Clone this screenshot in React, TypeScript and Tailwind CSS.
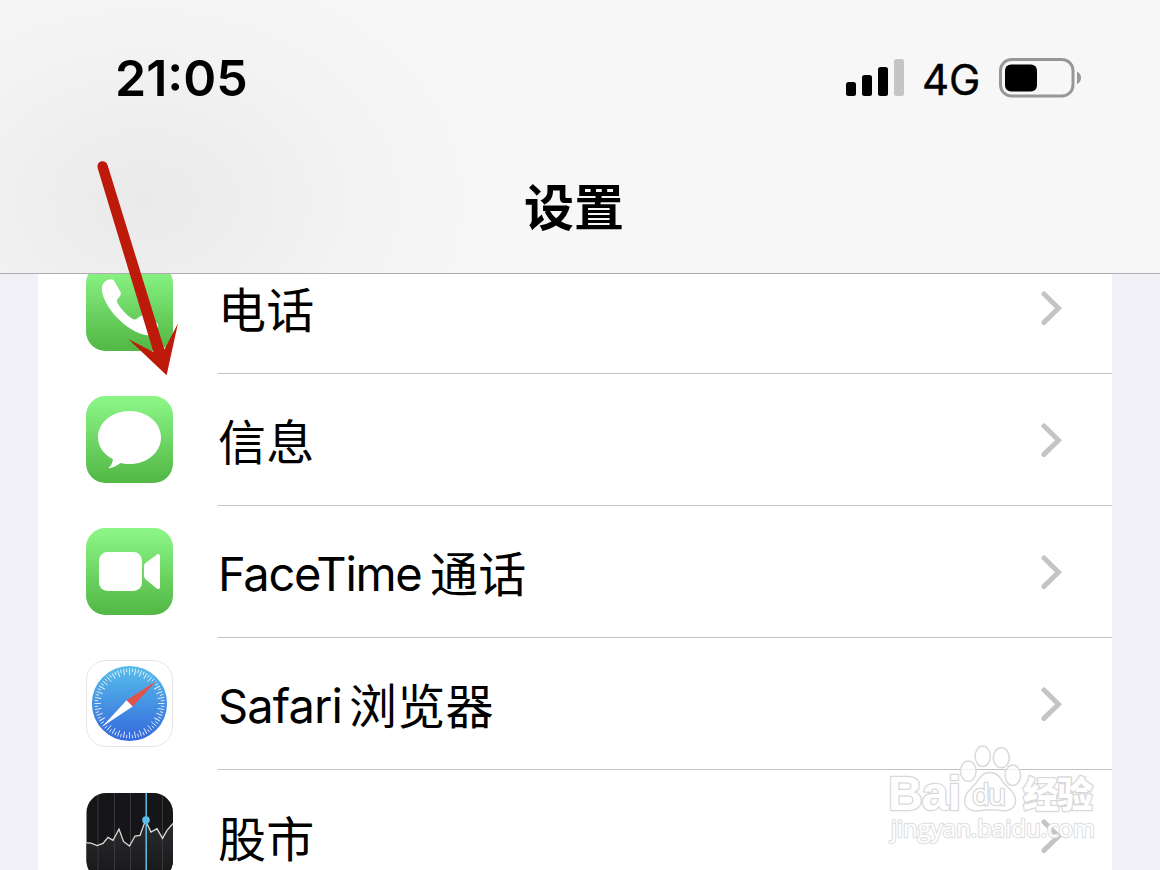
import type { ReactNode } from 'react'

interface SettingsRow {
  id: string
  latin?: string
  latinClass?: string
  label: string
  icon: ReactNode
}

function PhoneIcon() {
  return (
    <svg viewBox="0 0 87 87" className="size-[87px]">
      <rect width="87" height="87" rx="19.5" fill="url(#green)" />
      <path
        d="M22.5 15.8C25.5 14.8 27.6 15.6 28.6 17.4L34.3 27.6C35.3 29.6 35 31 33.6 32.6L31.6 35C30.6 36.4 30.8 37.8 31.8 39.4C35 45 40 50.4 45.5 54.2C47.4 55.6 49 55.8 50.6 54.8L55 51.8C57 50.6 58.6 50.8 60.4 52L70 58.2C72.6 60 72.8 62.2 71.6 64.6C69.6 68.8 66 71.6 61 71.2C51 70.2 39.4 62.6 31 53.6C22.6 44.6 16 33.4 15.8 25C15.8 20.4 18.2 17.2 22.5 15.8Z"
        fill="#fff"
      />
    </svg>
  )
}

function MessagesIcon() {
  return (
    <svg viewBox="0 0 87 87" className="size-[87px]">
      <rect width="87" height="87" rx="19.5" fill="url(#green)" />
      <path
        d="M43.5 15C26 15 12 26.6 12 41.4C12 50.4 17.6 58.2 26.8 63C26.8 66.4 25.2 69.6 22.8 71.6C22.4 72 22.8 72.4 23.4 72.3C27.6 71.6 31.4 69.6 34.4 67C37.2 67.7 40.4 68 43.5 68C61 68 75 56.2 75 41.4C75 26.6 61 15 43.5 15Z"
        fill="#fff"
      />
    </svg>
  )
}

function FaceTimeIcon() {
  return (
    <svg viewBox="0 0 87 87" className="size-[87px]">
      <rect width="87" height="87" rx="19.5" fill="url(#green)" />
      <rect x="13" y="24" width="43" height="39" rx="8.5" fill="#fff" />
      <path
        d="M58 38.4C58 36.8 58.6 35.8 59.8 34.8L70.4 27C72.4 25.4 74 26 74 28.6V58.4C74 61 72.4 61.8 70.4 60.2L59.8 51.4C58.6 50.4 58 49.4 58 47.8Z"
        fill="#fff"
      />
    </svg>
  )
}

function SafariIcon() {
  return (
    <svg viewBox="0 0 87 87" className="size-[87px]">
      <rect x="0.5" y="0.5" width="86" height="86" rx="19.5" fill="#fff" stroke="#e6e6e8" />
      <circle cx="43.5" cy="43.5" r="37.6" fill="url(#sky)" />
      {Array.from({ length: 72 }, (_, i) => (
        <line
          key={i}
          x1="43.5"
          x2="43.5"
          y1="8.5"
          y2={i % 2 === 0 ? 15 : 12}
          stroke="#fff"
          strokeWidth="0.9"
          opacity="0.85"
          transform={`rotate(${i * 5} 43.5 43.5)`}
        />
      ))}
      <path d="M70.5 20.8L40.6 40.2L46.6 46.6Z" fill="#e0524a" />
      <path d="M16.4 66.4L40.6 40.2L46.6 46.6Z" fill="#fff" />
    </svg>
  )
}

function StocksIcon() {
  return (
    <svg viewBox="0 0 87 87" className="mt-px size-[87px]">
      <clipPath id="stocks">
        <rect x="0.5" width="86.5" height="87" rx="19.5" />
      </clipPath>
      <g clipPath="url(#stocks)">
        <rect width="87" height="87" fill="#161618" />
        <path
          d="M0 50L11 53L18 50L23 44L27 47L33 36L37 48L43 53L50 43H54L59 30L65 39L71 36L76 46L87 31V87H0Z"
          fill="url(#graph)"
        />
        <path d="M12 0V87M28.5 0V87M44.5 0V87M76.5 0V87" stroke="#38383a" strokeWidth="1" />
        <path
          d="M0 49.8L5 50.2L11 52.6L17 50.4L22 44.4L27 47.4L33 36L37.5 48.4L43.5 53L49 43L54 42.4L59.5 27.4L65 39L71 35.6L76.5 45.4L81 37.4L87 30.4"
          fill="none"
          stroke="#dcdcdc"
          strokeWidth="1.3"
        />
        <path d="M60.2 0V87" stroke="#59b5dd" strokeWidth="1.6" />
        <circle cx="60" cy="27" r="3.8" fill="#5bbcea" />
      </g>
    </svg>
  )
}

const ROWS: SettingsRow[] = [
  { id: 'phone', label: '电话', icon: <PhoneIcon /> },
  { id: 'messages', label: '信息', icon: <MessagesIcon /> },
  {
    id: 'facetime',
    latin: 'FaceTime',
    latinClass: 'w-[212px] tracking-[-1.3px]',
    label: '通话',
    icon: <FaceTimeIcon />,
  },
  {
    id: 'safari',
    latin: 'Safari',
    latinClass: 'w-[131px] tracking-[-0.9px]',
    label: '浏览器',
    icon: <SafariIcon />,
  },
  { id: 'stocks', label: '股市', icon: <StocksIcon /> },
]

function SharedGradients() {
  return (
    <svg className="absolute size-0">
      <defs>
        <linearGradient id="green" x1="0" y1="0" x2="0" y2="1">
          <stop offset="0.05" stopColor="#8af585" />
          <stop offset="0.95" stopColor="#54b947" />
        </linearGradient>
        <linearGradient id="sky" x1="0" y1="0" x2="0" y2="1">
          <stop offset="0" stopColor="#57bdea" />
          <stop offset="1" stopColor="#3468dc" />
        </linearGradient>
        <linearGradient id="graph" x1="0" y1="0" x2="0" y2="1">
          <stop offset="0" stopColor="#2c2c2e" />
          <stop offset="1" stopColor="#161618" />
        </linearGradient>
      </defs>
    </svg>
  )
}

function StatusBar() {
  return (
    <div className="flex h-[156px] items-center justify-between pl-[115px] pr-[78px]">
      <span className="font-['Inter'] text-[50px] font-semibold leading-none">21:05</span>
      <div className="flex items-center">
        <svg viewBox="0 0 58 38" className="h-[38px] w-[58px]">
          <rect x="0" y="23" width="10" height="14" rx="2.5" />
          <rect x="16" y="16" width="10" height="21" rx="2.5" />
          <rect x="32" y="8" width="10" height="29" rx="2.5" />
          <rect x="48" y="0" width="10" height="37" rx="2.5" fill="#c5c5c5" />
        </svg>
        <span className="ml-[18px] w-[58px] whitespace-nowrap pt-[3px] font-['Inter'] text-[42px] leading-none tracking-[-0.2px] [-webkit-text-stroke:0.4px_black]">
          4G
        </span>
        <svg viewBox="0 0 83 40" className="ml-[19px] h-10 w-[83px]">
          <rect x="1.5" y="1.5" width="72.5" height="36.5" rx="11" fill="none" stroke="#979797" strokeWidth="3" />
          <rect x="6" y="6.5" width="32" height="27" rx="6" />
          <path d="M78 13.5C80.6 14.8 82 17 82 19.8C82 22.6 80.6 24.8 78 26.2Z" fill="#979797" />
        </svg>
      </div>
    </div>
  )
}

function Row({ row, last }: { row: SettingsRow; last: boolean }) {
  return (
    <li className="flex h-[132px] pl-12">
      <div className="flex h-[131px] w-[132px] shrink-0 items-center">{row.icon}</div>
      <div className={`flex flex-1 items-center justify-between pr-[50px] ${last ? '' : 'border-b border-[#c3c3c5]'}`}>
        <div className={`flex items-baseline whitespace-nowrap leading-none ${row.latin ? '' : 'pb-px'}`}>
          {row.latin && (
            <span className={`font-['Inter'] text-[47px] ${row.latinClass}`}>{row.latin}</span>
          )}
          <span
            className={`font-['Noto_Sans_CJK_SC',sans-serif] text-[48px] tracking-[0.3px] ${row.latin ? 'relative top-px' : ''}`}
          >
            {row.label}
          </span>
        </div>
        <svg
          viewBox="0 0 22 36"
          className="h-9 w-[22px]"
          fill="none"
          stroke="#c4c4c6"
          strokeWidth="5"
          strokeLinecap="round"
        >
          <path d="M4 4L18.5 18.2L4 32.4" />
        </svg>
      </div>
    </li>
  )
}

function Watermark() {
  return (
    <svg viewBox="880 740 230 110" className="absolute left-[880px] top-[740px] h-[110px] w-[230px]">
      <g fill="#fff" fillOpacity="0.75" stroke="#dadada" strokeWidth="1.5">
        <ellipse cx="982.7" cy="756.3" rx="7.6" ry="10.2" />
        <ellipse cx="1001.3" cy="757.8" rx="8" ry="10" />
        <ellipse cx="968.3" cy="771.2" rx="7.8" ry="10.2" />
        <ellipse cx="1012.8" cy="775.3" rx="7.8" ry="10.2" />
        <path d="M990 772.5C997 772.5 1000 777 1003 782C1007 788 1016 792 1015.6 801C1015.2 809 1008 811.6 1001 810.6C994 809.6 987 809.6 980 810.8C972 812 965 809 964.6 801C964.4 793 971 789 976 783C980 777 983 772.5 990 772.5Z" />
      </g>
      <g fill="#fff" stroke="#d8d8d8" strokeWidth="2.6" strokeLinejoin="round" paintOrder="stroke">
        <text x="888" y="809.5" fontFamily="Liberation Sans" fontWeight="700" fontSize="48" textLength="73">
          Bai
        </text>
        <text x="972" y="804.5" fontFamily="Open Sans" fontSize="29" textLength="34">
          du
        </text>
        <text x="1023" y="808" fontFamily="Noto Sans CJK SC" fontWeight="900" fontSize="36" textLength="70">
          经验
        </text>
      </g>
      <text
        x="891"
        y="837"
        fontFamily="Open Sans"
        fontSize="24"
        textLength="204"
        lengthAdjust="spacingAndGlyphs"
        fill="#fff"
        stroke="#e2e2e2"
        strokeWidth="2.4"
        strokeLinejoin="round"
        paintOrder="stroke"
      >
        jingyan.baidu.com
      </text>
    </svg>
  )
}

function PointerArrow() {
  return (
    <svg viewBox="90 155 100 230" className="absolute left-[90px] top-[155px] z-20 h-[230px] w-[100px]">
      <path
        d="M97.7 168.2C96 161 105.8 158.6 107.7 165.4L164.4 349.6L178 323.3L166.6 375.2L128.2 339L153.4 352Z"
        fill="#be1a0b"
      />
    </svg>
  )
}

export default function App() {
  return (
    <div className="relative h-[870px] w-[1160px] overflow-hidden bg-[#f1f0f6] text-black">
      <SharedGradients />
      <header className="relative z-10 h-[274px] border-b border-[#adadb0] bg-[#f7f7f7] bg-[radial-gradient(ellipse_360px_270px_at_145px_200px,#eaeaea_0%,#eeeeee_28%,#f3f3f3_58%,#f7f7f7_100%)]">
        <StatusBar />
        <h1 className="pr-3 text-center font-['Noto_Sans_CJK_SC',sans-serif] text-[50px] font-bold leading-[97px]">
          设置
        </h1>
      </header>
      <ul className="-mt-8 ml-[38px] w-[1074px] bg-white">
        {ROWS.map((row, index) => (
          <Row key={row.id} row={row} last={index === ROWS.length - 1} />
        ))}
      </ul>
      <Watermark />
      <PointerArrow />
    </div>
  )
}
